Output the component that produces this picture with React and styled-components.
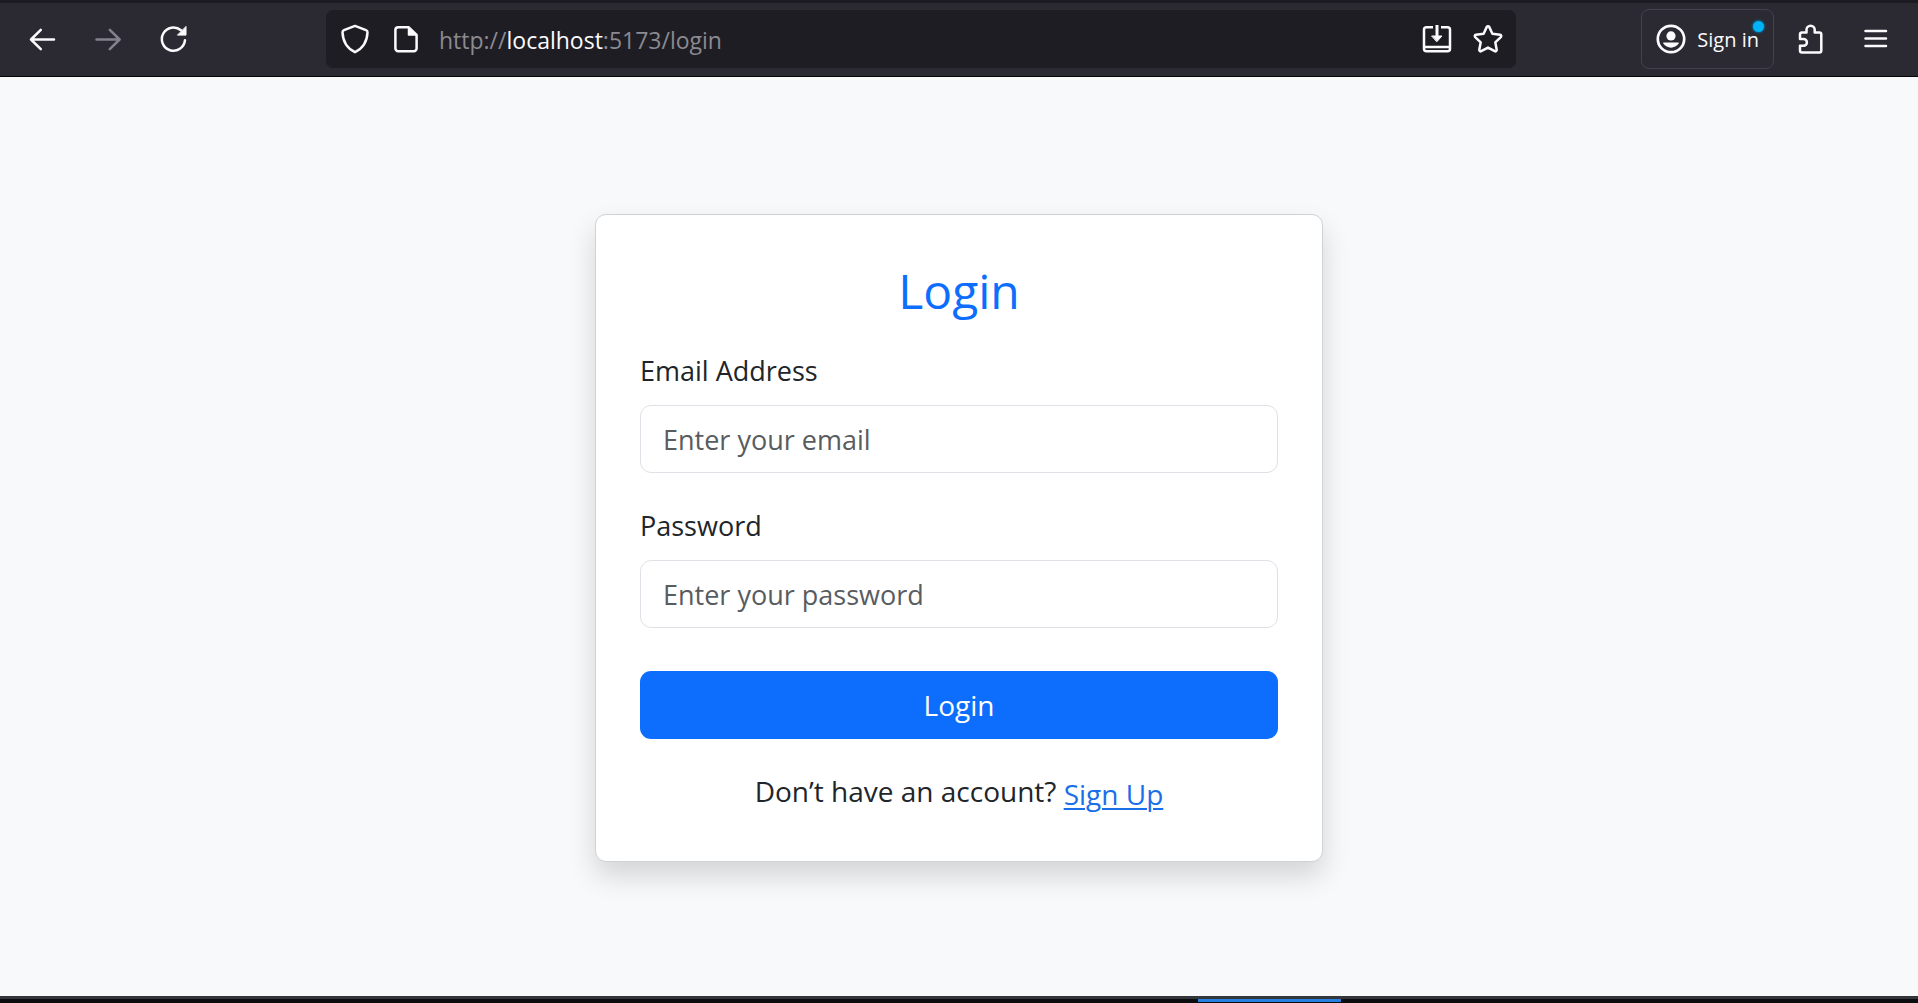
import React from "react";
import styled, { createGlobalStyle, css } from "styled-components";

const GlobalStyle = createGlobalStyle`
  *, *::before, *::after { box-sizing: border-box; }
  body {
    margin: 0;
    background: #f8f9fb;
    color: #212529;
    font-family: "Segoe UI", "Open Sans", "Noto Sans", sans-serif;
  }
  button, input { font-family: inherit; }
`;

const Window = styled.div`
  display: flex;
  flex-direction: column;
  min-height: 100vh;
`;

const Toolbar = styled.header`
  display: flex;
  align-items: center;
  height: 77px;
  padding-bottom: 1px;
  border-top: 3px solid #1c1b22;
  border-bottom: 1px solid #050507;
  background: #2b2a33;
  color: #fbfbfe;
`;

const NavGroup = styled.nav`
  display: flex;
  flex: 0 0 326px;
  padding-left: 9px;
`;

const ActionGroup = styled.div`
  display: flex;
  flex: 0 0 402px;
  align-items: center;
  justify-content: flex-end;
  padding-right: 10px;
`;

const IconButton = styled.button`
  display: flex;
  align-items: center;
  justify-content: center;
  width: ${(p) => p.$width}px;
  height: 58px;
  padding: 0;
  border: 0;
  background: none;
  color: inherit;
  ${(p) =>
    p.disabled &&
    css`
      color: #84838d;
    `}
`;

const AddressBar = styled.div`
  display: flex;
  flex: 1;
  align-items: center;
  min-width: 0;
  height: 58px;
  padding: 0 3px;
  border-radius: 7px;
  background: #1e1d24;
`;

const Address = styled.div`
  flex: 1;
  min-width: 0;
  padding: 2px 0 0 8px;
  overflow: hidden;
  color: #8b8a91;
  font-size: 23px;
  line-height: 32px;
  white-space: nowrap;
  outline: none;
`;

const Host = styled.span`
  color: #fbfbfe;
`;

const AccountButton = styled.button`
  display: flex;
  position: relative;
  align-items: center;
  gap: 10px;
  height: 60px;
  margin-right: 4px;
  padding: 0 14px 0 13px;
  border: 1px solid #42414d;
  border-radius: 8px;
  background: none;
  color: inherit;
  font-size: 20px;
  line-height: 28px;
`;

const AccountLabel = styled.span`
  padding-top: 2px;
`;

const Badge = styled.span`
  position: absolute;
  top: 11px;
  right: 9px;
  width: 11px;
  height: 11px;
  border-radius: 50%;
  background: #00b3f4;
  box-shadow: 0 0 2px 1px #0a6a94;
`;

const Main = styled.main`
  display: flex;
  flex: 1;
  align-items: center;
  justify-content: center;
  padding-top: 2px;
`;

const Card = styled.section`
  width: 100%;
  max-width: 728px;
  padding: 44px;
  border: 1px solid #d0d2d4;
  border-radius: 11px;
  background: #fff;
  box-shadow: 0 14px 28px rgba(0, 0, 0, 0.15);
`;

const Title = styled.h1`
  margin: 0 0 26px;
  color: #0d6efd;
  font-size: 48px;
  font-weight: 400;
  line-height: 64px;
  text-align: center;
`;

const Field = styled.div`
  margin-bottom: ${(p) => p.$gap}px;
`;

const Label = styled.label`
  display: block;
  margin-bottom: 13px;
  font-size: 27px;
  line-height: 43px;
`;

const TextInput = styled.input`
  display: block;
  width: 100%;
  height: 68px;
  padding: 2px 22px 0;
  border: 1px solid #dee2e6;
  border-radius: 11px;
  background: #fff;
  color: #212529;
  font-size: 27px;
  line-height: 43px;
  outline: none;

  &::placeholder {
    color: #595c5f;
    opacity: 1;
  }
`;

const SubmitButton = styled.button`
  display: block;
  width: 100%;
  height: 68px;
  padding: 2px 0 0;
  border: 0;
  border-radius: 11px;
  background: #0d6efd;
  color: #fff;
  font-size: 28px;
  line-height: 43px;
`;

const SignUpLine = styled.p`
  margin: 31px 0 0;
  font-size: 28px;
  line-height: 43px;
  text-align: center;
`;

const SignUpLink = styled.a`
  display: inline-block;
  padding: 1px 0;
  vertical-align: middle;
  color: #1a6fe8;
  text-decoration: underline 2px;
  text-underline-offset: 3px;
`;

const Taskbar = styled.footer`
  display: flex;
  height: 7px;
  border-top: 3px solid #33363b;
  background: #0b0c0e;
`;

const ActiveTask = styled.div`
  width: 143px;
  height: 3px;
  margin-left: 62.46%;
  background: #2680e0;
`;

function Icon({ children, size = 32 }) {
  return (
    <svg
      width={size}
      height={size}
      viewBox="0 0 32 32"
      fill="none"
      stroke="currentColor"
      strokeWidth="2.5"
      strokeLinecap="round"
      strokeLinejoin="round"
      aria-hidden="true"
    >
      {children}
    </svg>
  );
}

const BackIcon = () => (
  <Icon>
    <path d="M28 16.500H5M14.800 6.800 5 16.500l9.800 9.700" />
  </Icon>
);

const ForwardIcon = () => (
  <Icon>
    <path d="M4.500 16.500h23M17.800 6.800l9.800 9.700-9.800 9.700" />
  </Icon>
);

const ReloadIcon = () => (
  <Icon>
    <path d="M27 17.200A11.600 11.600 0 1 1 23 7.300" />
    <path d="M28 3.800v8.300h-8.200z" fill="currentColor" strokeWidth="1" />
  </Icon>
);

const ShieldIcon = () => (
  <Icon>
    <path d="M16 2.900 27 7.100c1 .4 1.500 1 1.500 2.100-.3 8.400-3.900 15.700-12.500 20-8.600-4.300-12.200-11.600-12.500-20 0-1.100.5-1.700 1.500-2.100z" />
  </Icon>
);

const PageIcon = () => (
  <Icon>
    <path d="M18.500 4.200H8.200A2.800 2.800 0 0 0 5.400 7v18.500a2.800 2.800 0 0 0 2.800 2.800h15.600a2.800 2.800 0 0 0 2.800-2.800V12z" />
    <path d="M18.500 4.200v7.800h8z" fill="currentColor" strokeWidth="1.500" />
  </Icon>
);

const InstallIcon = () => (
  <Icon>
    <path d="M12 4.200H5.500A2.500 2.500 0 0 0 3 6.700v19a2.500 2.500 0 0 0 2.500 2.500h21a2.500 2.500 0 0 0 2.500-2.500v-19a2.500 2.500 0 0 0-2.500-2.500H20M3 24h26" strokeLinecap="butt" />
    <path d="M16 2v12" strokeWidth="3" strokeLinecap="butt" />
    <path d="M11 13h10l-5 5.500z" fill="currentColor" strokeWidth="1" />
  </Icon>
);

const StarIcon = () => (
  <Icon>
    <path d="M14.800 3.900c.5-1 1.900-1 2.400 0l3.200 6.900 7.700 1c1.100.2 1.500 1.500.7 2.300l-5.500 5.200 1.400 7.500c.2 1.100-1 1.900-1.900 1.400L16 24.600l-6.800 3.600c-.9.5-2.100-.3-1.900-1.400l1.400-7.500-5.500-5.200c-.8-.8-.4-2.100.7-2.300l7.700-1z" />
  </Icon>
);

const AccountIcon = () => (
  <Icon>
    <circle cx="16" cy="16" r="13.200" strokeWidth="2.700" />
    <circle cx="16" cy="12.900" r="4.600" fill="currentColor" stroke="none" />
    <path d="M8.900 19.500h14.200c.7 0 1 .6.600 1.100-3.700 5.400-11.700 5.400-15.400 0-.4-.5-.1-1.100.6-1.100z" fill="currentColor" stroke="none" />
  </Icon>
);

const ExtensionIcon = () => (
  <Icon>
    <path d="M7 9.400h4.500V6.800a4.100 4.100 0 0 1 8.200 0v2.600h4.600a2 2 0 0 1 2 2v16a2 2 0 0 1-2 2H7a2 2 0 0 1-2-2v-4.600h3.500a3.400 3.400 0 0 0 0-6.800H5v-4.600a2 2 0 0 1 2-2z" />
  </Icon>
);

const MenuIcon = () => (
  <Icon>
    <path d="M5.500 8H26M5.500 15.500H26M5.500 23H26" />
  </Icon>
);

export default function App() {
  return (
    <Window>
      <GlobalStyle />
      <Toolbar>
        <NavGroup aria-label="History">
          <IconButton type="button" $width={66} aria-label="Back"><BackIcon /></IconButton>
          <IconButton type="button" $width={66} aria-label="Forward" disabled><ForwardIcon /></IconButton>
          <IconButton type="button" $width={66} aria-label="Reload"><ReloadIcon /></IconButton>
        </NavGroup>
        <AddressBar>
          <IconButton type="button" $width={51} aria-label="Tracking protection"><ShieldIcon /></IconButton>
          <IconButton type="button" $width={51} aria-label="Site information"><PageIcon /></IconButton>
          <Address role="textbox" aria-label="Address" contentEditable suppressContentEditableWarning spellCheck={false}>
            http://<Host>localhost</Host>:5173/login
          </Address>
          <IconButton type="button" $width={51} aria-label="Install"><InstallIcon /></IconButton>
          <IconButton type="button" $width={51} aria-label="Bookmark"><StarIcon /></IconButton>
        </AddressBar>
        <ActionGroup>
          <AccountButton type="button">
            <AccountIcon />
            <AccountLabel>Sign in</AccountLabel>
            <Badge />
          </AccountButton>
          <IconButton type="button" $width={65} aria-label="Extensions"><ExtensionIcon /></IconButton>
          <IconButton type="button" $width={65} aria-label="Menu"><MenuIcon /></IconButton>
        </ActionGroup>
      </Toolbar>
      <Main>
        <Card>
          <Title>Login</Title>
          <form onSubmit={(e) => e.preventDefault()}>
            <Field $gap={31}>
              <Label htmlFor="email">Email Address</Label>
              <TextInput id="email" type="email" placeholder="Enter your email" />
            </Field>
            <Field $gap={43}>
              <Label htmlFor="password">Password</Label>
              <TextInput id="password" type="password" placeholder="Enter your password" />
            </Field>
            <SubmitButton type="submit">Login</SubmitButton>
          </form>
          <SignUpLine>
            Don’t have an account? <SignUpLink href="#signup">Sign Up</SignUpLink>
          </SignUpLine>
        </Card>
      </Main>
      <Taskbar>
        <ActiveTask />
      </Taskbar>
    </Window>
  );
}
